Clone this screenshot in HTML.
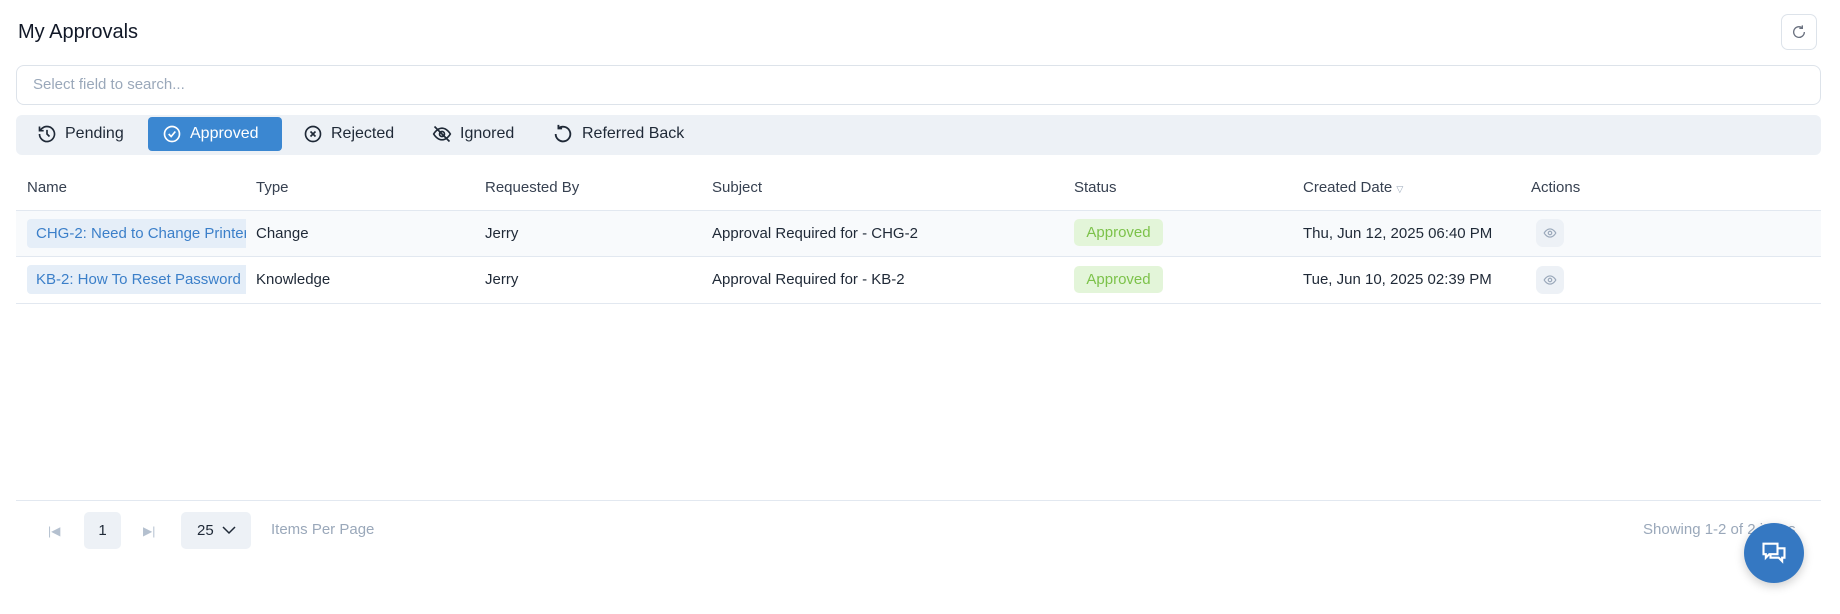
<!DOCTYPE html>
<html><head><style>
*{box-sizing:border-box;margin:0;padding:0}
body{width:1840px;height:614px;background:#fff;font-family:"Liberation Sans",sans-serif;color:#1f2937;position:relative;overflow:hidden;font-size:15px}
.abs{position:absolute}
.title{left:18px;top:21px;font-size:20px;color:#111827}
.refresh{left:1781px;top:14px;width:36px;height:36px;border:1px solid #dde3ea;border-radius:7px;display:flex;align-items:center;justify-content:center}
.search{left:16px;top:65px;width:1805px;height:40px;border:1px solid #dde3ea;border-radius:8px;padding:0 16px;line-height:38px;color:#9aa8ba;font-size:15px}
.tabs{left:16px;top:115px;width:1805px;height:40px;background:#edf1f6;border-radius:6px}
.tab{position:absolute;top:2px;height:34px;display:flex;align-items:center;gap:8px;font-size:16px;color:#1f2937;padding:0 14px}
.tab.on{background:#3b87d1;color:#fff;border-radius:4px}
.th{top:179px;font-size:15px;color:#374151}
.line{left:16px;width:1805px;height:1px;background:#e2e8f0}
.row1{left:16px;top:211px;width:1805px;height:45px;background:#f8fafc}
.cell{font-size:15px;color:#1f2937}
.chip{left:27px;width:219px;height:29px;background:#e5eef8;color:#3b7fc9;border-radius:4px 0 0 4px;padding-left:9px;line-height:29px;white-space:nowrap;overflow:hidden;font-size:15px}
.st{left:1074px;width:89px;height:27px;background:#e3f5d9;color:#7cc24a;border-radius:5px;text-align:center;line-height:27px;font-size:15px}
.eye{left:1536px;width:28px;height:28px;background:#edf1f6;border-radius:7px;display:flex;align-items:center;justify-content:center}
</style></head><body>
<div class="abs title">My Approvals</div>
<div class="abs refresh"><svg width="16" height="16" viewBox="0 0 24 24" fill="none" stroke="#6b7280" stroke-width="2"><path d="M20 12a8 8 0 1 1-3-6.2"/><path d="M17 2v4.5h-4.5"/></svg></div>
<div class="abs search">Select field to search...</div>
<div class="abs tabs">
 <div class="tab" style="left:7px"><svg width="20" height="20" viewBox="0 0 24 24" fill="none" stroke="#1f2937" stroke-width="2"><path d="M3 12a9 9 0 1 0 3-6.7L3 8"/><path d="M3 3v5h5"/><path d="M12 7v5l3 3"/></svg>Pending</div>
 <div class="tab on" style="left:132px;width:134px"><svg width="20" height="20" viewBox="0 0 24 24" fill="none" stroke="#fff" stroke-width="2"><circle cx="12" cy="12" r="9"/><path d="M8 12l3 3 5-6"/></svg>Approved</div>
 <div class="tab" style="left:273px"><svg width="20" height="20" viewBox="0 0 24 24" fill="none" stroke="#1f2937" stroke-width="2"><circle cx="12" cy="12" r="9"/><path d="M9 9l6 6M15 9l-6 6"/></svg>Rejected</div>
 <div class="tab" style="left:402px"><svg width="20" height="20" viewBox="0 0 24 24" fill="none" stroke="#1f2937" stroke-width="2"><path d="M2 12s4-7 10-7 10 7 10 7-4 7-10 7S2 12 2 12z"/><circle cx="12" cy="12" r="3"/><path d="M3 3l18 18"/></svg>Ignored</div>
 <div class="tab" style="left:522px"><svg width="22" height="22" viewBox="0 0 24 24" fill="none" stroke="#1f2937" stroke-width="2"><path d="M4 12a8 8 0 1 0 3-6.2"/><path d="M7 2v4h4"/></svg>Referred Back</div>
</div>
<div class="abs th" style="left:27px">Name</div>
<div class="abs th" style="left:256px">Type</div>
<div class="abs th" style="left:485px">Requested By</div>
<div class="abs th" style="left:712px">Subject</div>
<div class="abs th" style="left:1074px">Status</div>
<div class="abs th" style="left:1303px">Created Date <span style="color:#9aa8ba;font-size:9px">▽</span></div>
<div class="abs th" style="left:1531px">Actions</div>
<div class="abs line" style="top:210px"></div>
<div class="abs row1"></div>
<div class="abs line" style="top:256px"></div>
<div class="abs line" style="top:303px"></div>

<div class="abs chip" style="top:219px">CHG-2: Need to Change Printer</div>
<div class="abs cell" style="left:256px;top:225px">Change</div>
<div class="abs cell" style="left:485px;top:225px">Jerry</div>
<div class="abs cell" style="left:712px;top:225px">Approval Required for - CHG-2</div>
<div class="abs st" style="top:219px">Approved</div>
<div class="abs cell" style="left:1303px;top:225px">Thu, Jun 12, 2025 06:40 PM</div>
<div class="abs eye" style="top:219px"><svg width="14" height="14" viewBox="0 0 24 24" fill="none" stroke="#9aa8ba" stroke-width="2"><path d="M2 12s4-7 10-7 10 7 10 7-4 7-10 7S2 12 2 12z"/><circle cx="12" cy="12" r="3"/></svg></div>

<div class="abs chip" style="top:265px">KB-2: How To Reset Password</div>
<div class="abs cell" style="left:256px;top:271px">Knowledge</div>
<div class="abs cell" style="left:485px;top:271px">Jerry</div>
<div class="abs cell" style="left:712px;top:271px">Approval Required for - KB-2</div>
<div class="abs st" style="top:266px">Approved</div>
<div class="abs cell" style="left:1303px;top:271px">Tue, Jun 10, 2025 02:39 PM</div>
<div class="abs eye" style="top:266px"><svg width="14" height="14" viewBox="0 0 24 24" fill="none" stroke="#9aa8ba" stroke-width="2"><path d="M2 12s4-7 10-7 10 7 10 7-4 7-10 7S2 12 2 12z"/><circle cx="12" cy="12" r="3"/></svg></div>

<div class="abs line" style="top:500px"></div>
<div class="abs" style="left:48px;top:524px;color:#b4c0cf;font-size:12px">|◀</div>
<div class="abs" style="left:84px;top:512px;width:37px;height:37px;background:#edf1f6;border-radius:5px;text-align:center;line-height:37px;font-size:15px;color:#1f2937">1</div>
<div class="abs" style="left:143px;top:524px;color:#b4c0cf;font-size:12px">▶|</div>
<div class="abs" style="left:181px;top:512px;width:70px;height:37px;background:#edf1f6;border-radius:5px;line-height:37px;padding-left:16px;font-size:15px">25 <svg width="14" height="10" viewBox="0 0 14 10" style="margin-left:4px"><path d="M1 2l6 6 6-6" fill="none" stroke="#1f2937" stroke-width="1.5"/></svg></div>
<div class="abs" style="left:271px;top:521px;color:#9aa8ba;font-size:15px">Items Per Page</div>
<div class="abs" style="left:1643px;top:521px;color:#9aa8ba;font-size:15px">Showing 1-2 of 2 items</div>
<div class="abs" style="left:1744px;top:523px;width:60px;height:60px;border-radius:50%;background:#3578c2;box-shadow:0 3px 10px rgba(0,0,0,.2);display:flex;align-items:center;justify-content:center"><svg width="28" height="28" viewBox="0 0 24 24" fill="none" stroke="#fff" stroke-width="1.8"><path d="M3 4h12v9H8l-3 3v-3H3z"/><path d="M9 13v3h7l3 3v-3h2V8h-6"/></svg></div>
</body></html>
